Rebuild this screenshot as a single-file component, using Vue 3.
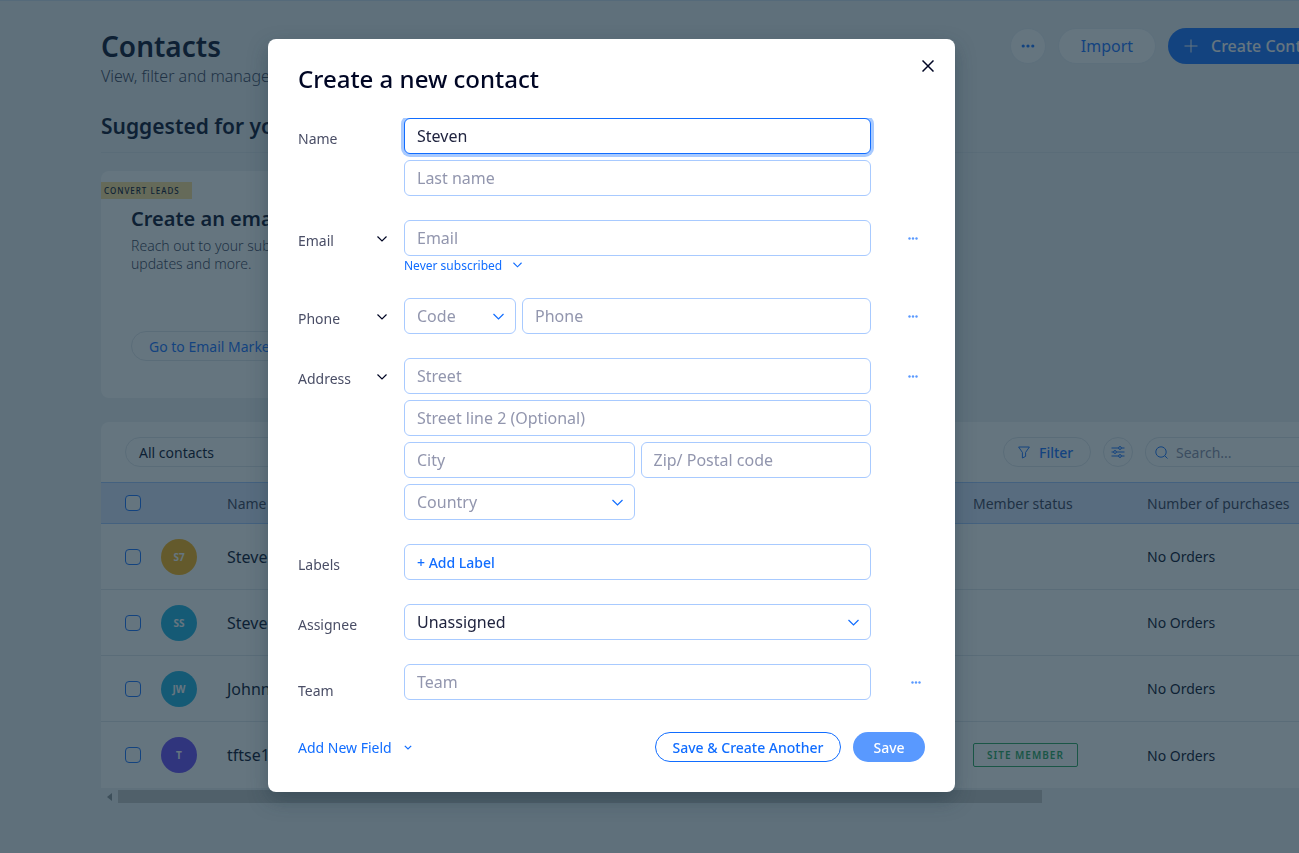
<script setup>
import { ref } from 'vue'

const firstName = ref('Steven')
const assignee = ref('Unassigned')

const contacts = [
  { initials: 'S7', tone: 'amber', name: 'Steven 7', orders: 'No Orders', member: false },
  { initials: 'SS', tone: 'teal', name: 'Steven S', orders: 'No Orders', member: false },
  { initials: 'JW', tone: 'teal', name: 'Johnny W', orders: 'No Orders', member: false },
  { initials: 'T', tone: 'violet', name: 'tftse123', orders: 'No Orders', member: true },
]
</script>

<template>
  <div class="page">
    <header class="page-header">
      <div>
        <h1>Contacts</h1>
        <p class="subtitle">View, filter and manage</p>
      </div>
      <div class="page-actions">
        <button class="round-btn" type="button" aria-label="More actions">
          <svg width="14" height="4" viewBox="0 0 14 4" fill="currentColor"><circle cx="2.2" cy="2" r="1.6" /><circle cx="7" cy="2" r="1.6" /><circle cx="11.8" cy="2" r="1.6" /></svg>
        </button>
        <button class="import-btn" type="button">Import</button>
        <button class="create-btn" type="button">
          <svg width="14" height="14" viewBox="0 0 14 14" fill="none" stroke="currentColor"><path d="M7 .5v13M.5 7h13" /></svg>
          <span>Create Contact</span>
        </button>
      </div>
    </header>

    <h2 class="suggested">Suggested for you</h2>

    <section class="promo">
      <span class="promo-tag">CONVERT LEADS</span>
      <h3>Create an email</h3>
      <p>Reach out to your subs<br />updates and more.</p>
      <button type="button">Go to Email Marketing</button>
    </section>

    <section class="table-card">
      <div class="toolbar">
        <button class="view-btn" type="button">All contacts</button>
        <div class="tools">
          <button class="filter-btn" type="button">
            <svg width="12" height="13" viewBox="0 0 12 13" fill="none" stroke="currentColor" stroke-linejoin="round"><path d="M.6 1h10.8L7.6 6.4v4L4.4 12V6.4z" /></svg>
            Filter
          </button>
          <button class="sliders-btn" type="button" aria-label="Customize columns">
            <svg width="14" height="12" viewBox="0 0 14 12" fill="none" stroke="currentColor"><path d="M.5 2h7M10.5 2h3M.5 6h2M5.5 6h8M.5 10h7M10.5 10h3" /><circle cx="9" cy="2" r="1.4" /><circle cx="4" cy="6" r="1.4" /><circle cx="9" cy="10" r="1.4" /></svg>
          </button>
          <label class="search">
            <svg width="13" height="13" viewBox="0 0 13 13" fill="none" stroke="currentColor"><circle cx="6" cy="6" r="5.2" /><path d="M9.7 9.7l2.8 2.8" /></svg>
            <input type="search" placeholder="Search..." aria-label="Search contacts" />
          </label>
        </div>
      </div>
      <table>
        <colgroup><col class="c-check" /><col class="c-avatar" /><col class="c-name" /><col class="c-status" /><col /></colgroup>
        <thead>
          <tr>
            <th class="check"><input type="checkbox" aria-label="Select all" /></th>
            <th></th>
            <th>Name</th>
            <th>Member status</th>
            <th>Number of purchases</th>
          </tr>
        </thead>
        <tbody>
          <tr v-for="c in contacts" :key="c.initials">
            <td class="check"><input type="checkbox" :aria-label="`Select ${c.name}`" /></td>
            <td><span class="avatar" :class="c.tone">{{ c.initials }}</span></td>
            <td class="name">{{ c.name }}</td>
            <td><span v-if="c.member" class="member">SITE MEMBER</span></td>
            <td>{{ c.orders }}</td>
          </tr>
        </tbody>
      </table>
    </section>
    <div class="scrollbar">
      <svg width="5" height="8" viewBox="0 0 5 8" fill="currentColor"><path d="M5 0v8L0 4z" /></svg>
      <div class="thumb"></div>
    </div>
  </div>

  <div class="overlay">
    <form class="modal" role="dialog" aria-labelledby="dialog-title" @submit.prevent>
      <header class="modal-header">
        <h2 id="dialog-title">Create a new contact</h2>
        <button class="close" type="button" aria-label="Close">
          <svg width="12" height="12" viewBox="0 0 12 12" fill="none" stroke="currentColor" stroke-width="1.5"><path d="M.5.5l11 11M11.5.5l-11 11" /></svg>
        </button>
      </header>

      <div class="fields">
        <div class="row">
          <div class="label"><label for="first">Name</label></div>
          <div class="stack">
            <input id="first" v-model="firstName" class="field focused" type="text" />
            <input class="field" type="text" placeholder="Last name" aria-label="Last name" />
          </div>
        </div>

        <div class="row">
          <div class="label">
            <label for="email">Email</label>
            <button class="type-btn" type="button" aria-label="Email type"><svg width="10" height="6" viewBox="0 0 10 6"><path d="M.5.5L5 5 9.5.5" /></svg></button>
          </div>
          <div>
            <input id="email" class="field" type="email" placeholder="Email" />
            <button class="subscribed" type="button">Never subscribed <svg width="9" height="6" viewBox="0 0 10 6"><path d="M.5.5L5 5 9.5.5" /></svg></button>
          </div>
          <button class="more" type="button" aria-label="Email options"><svg width="10" height="3" viewBox="0 0 10 3"><circle cx="1.5" cy="1.5" r="1.2" /><circle cx="5" cy="1.5" r="1.2" /><circle cx="8.5" cy="1.5" r="1.2" /></svg></button>
        </div>

        <div class="row">
          <div class="label">
            <label for="phone">Phone</label>
            <button class="type-btn" type="button" aria-label="Phone type"><svg width="10" height="6" viewBox="0 0 10 6"><path d="M.5.5L5 5 9.5.5" /></svg></button>
          </div>
          <div class="phone">
            <div class="select">
              <select class="field empty" aria-label="Country code"><option>Code</option></select>
              <svg width="11" height="7" viewBox="0 0 11 7"><path d="M.5 1l5 5 5-5" /></svg>
            </div>
            <input id="phone" class="field" type="tel" placeholder="Phone" />
          </div>
          <button class="more" type="button" aria-label="Phone options"><svg width="10" height="3" viewBox="0 0 10 3"><circle cx="1.5" cy="1.5" r="1.2" /><circle cx="5" cy="1.5" r="1.2" /><circle cx="8.5" cy="1.5" r="1.2" /></svg></button>
        </div>

        <div class="row">
          <div class="label">
            <label for="street">Address</label>
            <button class="type-btn" type="button" aria-label="Address type"><svg width="10" height="6" viewBox="0 0 10 6"><path d="M.5.5L5 5 9.5.5" /></svg></button>
          </div>
          <div class="stack">
            <input id="street" class="field" type="text" placeholder="Street" />
            <input class="field" type="text" placeholder="Street line 2 (Optional)" aria-label="Street line 2" />
            <div class="halves">
              <input class="field" type="text" placeholder="City" aria-label="City" />
              <input class="field" type="text" placeholder="Zip/ Postal code" aria-label="Zip or postal code" />
              <div class="select">
                <select class="field empty" aria-label="Country"><option>Country</option></select>
                <svg width="11" height="7" viewBox="0 0 11 7"><path d="M.5 1l5 5 5-5" /></svg>
              </div>
            </div>
          </div>
          <button class="more" type="button" aria-label="Address options"><svg width="10" height="3" viewBox="0 0 10 3"><circle cx="1.5" cy="1.5" r="1.2" /><circle cx="5" cy="1.5" r="1.2" /><circle cx="8.5" cy="1.5" r="1.2" /></svg></button>
        </div>

        <div class="row">
          <div class="label"><span id="labels-label">Labels</span></div>
          <div class="field label-box" role="group" aria-labelledby="labels-label"><button type="button">+ Add Label</button></div>
        </div>

        <div class="row">
          <div class="label"><label for="assignee">Assignee</label></div>
          <div class="select">
            <select id="assignee" v-model="assignee" class="field"><option>Unassigned</option></select>
            <svg width="11" height="7" viewBox="0 0 11 7"><path d="M.5 1l5 5 5-5" /></svg>
          </div>
        </div>

        <div class="row">
          <div class="label low"><label for="team">Team</label></div>
          <input id="team" class="field" type="text" placeholder="Team" />
          <button class="more narrow" type="button" aria-label="Team options"><svg width="10" height="3" viewBox="0 0 10 3"><circle cx="1.5" cy="1.5" r="1.2" /><circle cx="5" cy="1.5" r="1.2" /><circle cx="8.5" cy="1.5" r="1.2" /></svg></button>
        </div>
      </div>

      <footer class="modal-footer">
        <button class="add-field" type="button">Add New Field <svg width="8" height="5" viewBox="0 0 8 5"><path d="M.8.8L4 4 7.2.8" /></svg></button>
        <button class="save-another" type="button">Save &amp; Create Another</button>
        <button class="save" type="submit">Save</button>
      </footer>
    </form>
  </div>
</template>

<style>
html,
body {
  overflow: hidden;
  background: #ecf0f3;
}
</style>

<style scoped>
* {
  box-sizing: border-box;
}
.page,
.overlay {
  font-family: "Noto Sans", "Open Sans", sans-serif;
  color: #000624;
}
h1,
h2,
h3,
p {
  margin: 0;
}
button,
input,
select {
  font: inherit;
  color: inherit;
}
button {
  padding: 0;
  border: 0;
  background: none;
  white-space: nowrap;
}

.page {
  min-height: 100vh;
  padding: 27px 0 0 101px;
  border-top: 1px solid #cfdef0;
  overflow: hidden;
}
.page-header {
  display: flex;
  justify-content: space-between;
  align-items: flex-start;
}
h1 {
  font-size: 28px;
  line-height: 36px;
  font-weight: 600;
}
.subtitle {
  font-size: 16px;
  line-height: 24px;
  font-weight: 300;
  color: #333853;
}
.page-actions {
  display: flex;
  align-items: center;
  width: 289px;
  gap: 12px;
}
.round-btn,
.import-btn {
  flex: none;
  height: 36px;
  border: 1px solid #e6ecf4;
  border-radius: 18px;
  background: #fff;
  color: #116dff;
  font-size: 16px;
}
.round-btn {
  display: grid;
  place-items: center;
  width: 36px;
}
.import-btn {
  width: 98px;
}
.create-btn {
  display: flex;
  flex: none;
  align-items: center;
  gap: 13px;
  height: 36px;
  padding: 0 24px 0 16px;
  border-radius: 18px;
  background: #116dff;
  color: #fff;
  font-size: 16px;
  font-weight: 500;
}
.suggested {
  height: 39px;
  margin-top: 26px;
  margin-bottom: 18px;
  border-bottom: 1px solid #dfe5eb;
  font-size: 21px;
  line-height: 24px;
  font-weight: 600;
}
.promo {
  max-width: 800px;
  height: 227px;
  padding: 11px 30px 0;
  border-radius: 8px;
  background: #fff;
}
.promo-tag {
  display: block;
  width: 91px;
  margin-left: -30px;
  padding-left: 3px;
  background: #ffde91;
  font-size: 8px;
  line-height: 17px;
  font-weight: 500;
  letter-spacing: 1px;
  white-space: nowrap;
}
.promo h3 {
  margin-top: 6px;
  font-size: 20px;
  line-height: 28px;
  font-weight: 600;
}
.promo p {
  margin-top: 4px;
  color: #333853;
  font-size: 14px;
  line-height: 18px;
  font-weight: 300;
}
.promo button {
  height: 30px;
  margin-top: 58px;
  padding: 0 17px;
  border: 1px solid #dfe5eb;
  border-radius: 15px;
  color: #116dff;
  font-size: 14px;
}
.table-card {
  margin-top: 24px;
  border-radius: 8px 0 0;
  background: #fff;
}
.toolbar {
  display: flex;
  align-items: center;
  justify-content: space-between;
  height: 60px;
  padding-left: 24px;
  font-size: 14px;
}
.toolbar svg {
  flex: none;
  color: #116dff;
}
.view-btn {
  width: 240px;
  height: 30px;
  padding-left: 13px;
  border: 1px solid #dfe5eb;
  border-radius: 15px;
  text-align: left;
}
.tools {
  display: flex;
  gap: 12px;
  width: 296px;
}
.filter-btn,
.sliders-btn,
.search {
  display: flex;
  align-items: center;
  height: 30px;
  border: 1px solid #dfe5eb;
  border-radius: 15px;
}
.filter-btn {
  width: 88px;
  gap: 9px;
  padding-left: 14px;
  color: #116dff;
  font-weight: 500;
}
.sliders-btn {
  width: 30px;
  justify-content: center;
}
.search {
  flex: 1;
  gap: 8px;
  padding-left: 9px;
  border-right: 0;
  border-radius: 15px 0 0 15px;
}
.search input {
  width: 100%;
  min-width: 0;
  padding: 0;
  border: 0;
  outline: 0;
  background: none;
}
.search input::placeholder {
  color: #868aa5;
  opacity: 1;
}
table {
  width: 100%;
  table-layout: fixed;
  border-collapse: separate;
  border-spacing: 0;
  font-size: 14px;
}
.c-check {
  width: 60px;
}
.c-avatar {
  width: 66px;
}
.c-name {
  width: 746px;
}
.c-status {
  width: 174px;
}
th,
td {
  padding: 0;
  text-align: left;
  white-space: nowrap;
}
th {
  height: 42px;
  border-top: 1px solid #9ec4ff;
  border-bottom: 1px solid #9ec4ff;
  background: #d9e5ff;
  color: #333853;
  font-weight: 400;
}
td {
  height: 66px;
  border-bottom: 1px solid #dfe5eb;
}
tbody tr:last-child td {
  border-bottom: 0;
}
td.name {
  font-size: 16px;
}
.check {
  padding-left: 24px;
}
.check input {
  display: block;
  width: 16px;
  height: 16px;
  margin: 0;
  appearance: none;
  border: 1px solid #116dff;
  border-radius: 4px;
  background: #fff;
}
.avatar {
  display: grid;
  place-items: center;
  width: 36px;
  height: 36px;
  border-radius: 50%;
  color: #fff;
  font-size: 10px;
  font-weight: 700;
}
.amber {
  background: #fdb10c;
}
.teal {
  background: #17b0e2;
}
.violet {
  background: #6544f9;
}
.member {
  display: inline-block;
  padding: 0 13px;
  border: 1px solid #25a55a;
  border-radius: 2px;
  color: #25a55a;
  font-size: 10px;
  line-height: 22px;
  font-weight: 600;
  letter-spacing: 1px;
}
.scrollbar {
  display: flex;
  align-items: center;
  gap: 6px;
  padding: 2px 257px 0 6px;
  color: #8a8f94;
}
.thumb {
  flex: 1;
  height: 13px;
  background: #c1c1c1;
}

.overlay {
  position: fixed;
  inset: 0;
  display: flex;
  align-items: flex-start;
  justify-content: center;
  padding: 39px 76px 39px 0;
  background: rgba(22, 45, 61, 0.66);
}
.modal {
  width: 687px;
  padding: 0 30px 30px;
  border-radius: 8px;
  background: #fff;
  box-shadow: 0 8px 20px rgba(22, 45, 61, 0.35);
}
.modal-header {
  display: flex;
  align-items: flex-start;
  justify-content: space-between;
  height: 79px;
  padding-top: 24px;
}
.modal-header h2 {
  font-size: 24px;
  line-height: 32px;
  font-weight: 550;
}
.close {
  display: grid;
  place-items: center;
  width: 24px;
  height: 24px;
  margin: -9px -15px 0 0;
}
.fields {
  display: grid;
  gap: 24px;
}
.row {
  display: grid;
  grid-template-columns: 106px minmax(0, 1fr) 54px;
  align-items: start;
}
.label {
  display: flex;
  justify-content: space-between;
  padding: 12px 16px 0 0;
  color: #4a4e66;
  font-size: 14px;
  line-height: 18px;
  font-weight: 400;
}
.label.low {
  padding-top: 18px;
}
.type-btn {
  display: grid;
  place-items: center;
  width: 12px;
  height: 14px;
  color: #000624;
}
.modal svg path {
  fill: none;
  stroke: currentColor;
  stroke-width: 1.2;
}
.modal .close path {
  stroke-width: 1.5;
}
.stack {
  display: grid;
  gap: 6px;
}
.field {
  display: block;
  width: 100%;
  height: 36px;
  padding: 0 12px;
  border: 1px solid #a8caff;
  border-radius: 6px;
  outline: 0;
  background: #fff;
  color: #20243f;
  font-size: 16px;
  font-weight: 400;
}
.field::placeholder,
.field.empty {
  color: #9296ae;
  opacity: 1;
}
.focused {
  border-color: #116dff;
  box-shadow: 0 0 0 3px #a8caff;
  clip-path: inset(0 -3px -3px -3px);
}
.select {
  position: relative;
}
.select select {
  appearance: none;
}
.select svg {
  position: absolute;
  top: 15px;
  right: 12px;
  color: #116dff;
  pointer-events: none;
}
.phone {
  display: grid;
  grid-template-columns: 112px 1fr;
  gap: 6px;
}
.halves {
  display: grid;
  grid-template-columns: 1fr 1fr;
  gap: 6px;
}
.subscribed {
  display: flex;
  align-items: center;
  gap: 11px;
  height: 18px;
  color: #116dff;
  font-size: 12px;
}
.more {
  display: grid;
  place-items: center;
  justify-self: end;
  width: 24px;
  height: 36px;
  color: #116dff;
}
.more svg {
  fill: #5999ff;
}
.more.narrow {
  width: 18px;
}
.label-box {
  display: flex;
  align-items: center;
}
.label-box button {
  color: #116dff;
  font-size: 14px;
  font-weight: 500;
}
.modal-footer {
  display: flex;
  align-items: center;
  gap: 12px;
  margin-top: 32px;
  font-size: 14px;
}
.add-field {
  display: flex;
  align-items: center;
  gap: 12px;
  margin-right: auto;
  color: #116dff;
}
.save-another,
.save {
  height: 30px;
  border-radius: 15px;
  font-weight: 500;
}
.save-another {
  width: 186px;
  border: 1px solid #116dff;
  color: #116dff;
}
.save {
  width: 72px;
  background: #5999ff;
  color: #fff;
}
</style>
